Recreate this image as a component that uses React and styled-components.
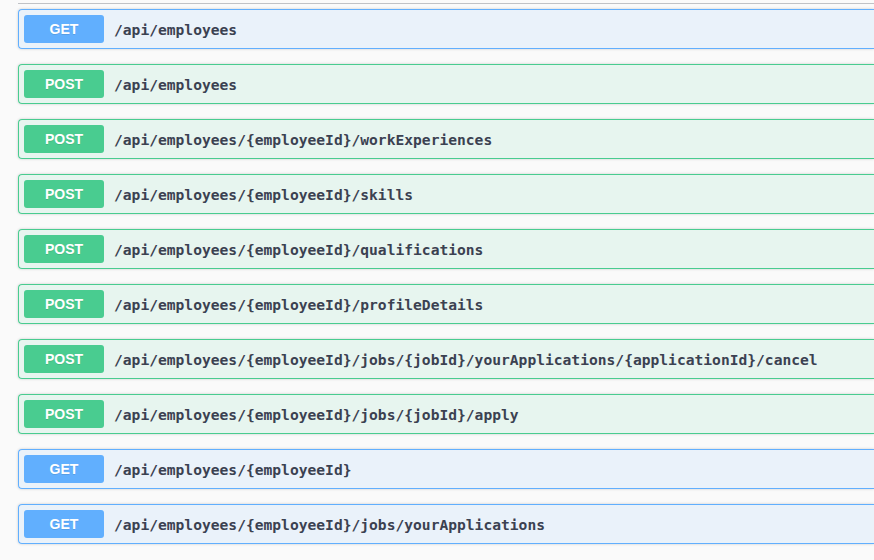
import React from "react";
import styled, { createGlobalStyle } from "styled-components";

const Global = createGlobalStyle`
  html, body { margin: 0; padding: 0; background: #fafafa; overflow: hidden; }
  body { width: 874px; height: 560px; }
`;

const Page = styled.div`
  padding: 3px 0 0 18px;
`;

const TagLine = styled.div`
  height: 0;
  border-bottom: 1px solid rgba(59, 65, 81, 0.3);
  margin-bottom: 5px;
`;

const colors = {
  GET: { main: "#61affe", bg: "rgba(97,175,254,.1)" },
  POST: { main: "#49cc90", bg: "rgba(73,204,144,.1)" },
};

const Block = styled.div`
  display: flex;
  align-items: center;
  box-sizing: border-box;
  height: 40px;
  padding: 5px;
  margin-bottom: 15px;
  border: 1px solid ${(p) => colors[p.$m].main};
  border-right: 0;
  background: ${(p) => colors[p.$m].bg};
  border-radius: 4px 0 0 4px;
  box-shadow: 0 0 3px rgba(0, 0, 0, 0.19);
  white-space: nowrap;
  overflow: hidden;
`;

const Badge = styled.span`
  display: flex;
  flex: none;
  align-items: center;
  justify-content: center;
  width: 80px;
  height: 28px;
  border-radius: 3px;
  background: ${(p) => colors[p.$m].main};
  color: #fff;
  font-family: "Liberation Sans", Arial, sans-serif;
  font-weight: 700;
  font-size: 14px;
  text-shadow: 0 1px 0 rgba(0, 0, 0, 0.1);
`;

const Path = styled.span`
  padding: 0 10px;
  font-family: "DejaVu Sans Mono", monospace;
  font-weight: 700;
  font-size: 14.62px;
  color: #3b4151;
`;

const ops = [
  ["GET", "/api/employees"],
  ["POST", "/api/employees"],
  ["POST", "/api/employees/{employeeId}/workExperiences"],
  ["POST", "/api/employees/{employeeId}/skills"],
  ["POST", "/api/employees/{employeeId}/qualifications"],
  ["POST", "/api/employees/{employeeId}/profileDetails"],
  ["POST", "/api/employees/{employeeId}/jobs/{jobId}/yourApplications/{applicationId}/cancel"],
  ["POST", "/api/employees/{employeeId}/jobs/{jobId}/apply"],
  ["GET", "/api/employees/{employeeId}"],
  ["GET", "/api/employees/{employeeId}/jobs/yourApplications"],
];

export default function App() {
  return (
    <>
      <Global />
      <Page>
        <TagLine />
        {ops.map(([m, p], i) => (
          <Block key={i} $m={m}>
            <Badge $m={m}>{m}</Badge>
            <Path>{p}</Path>
          </Block>
        ))}
      </Page>
    </>
  );
}
